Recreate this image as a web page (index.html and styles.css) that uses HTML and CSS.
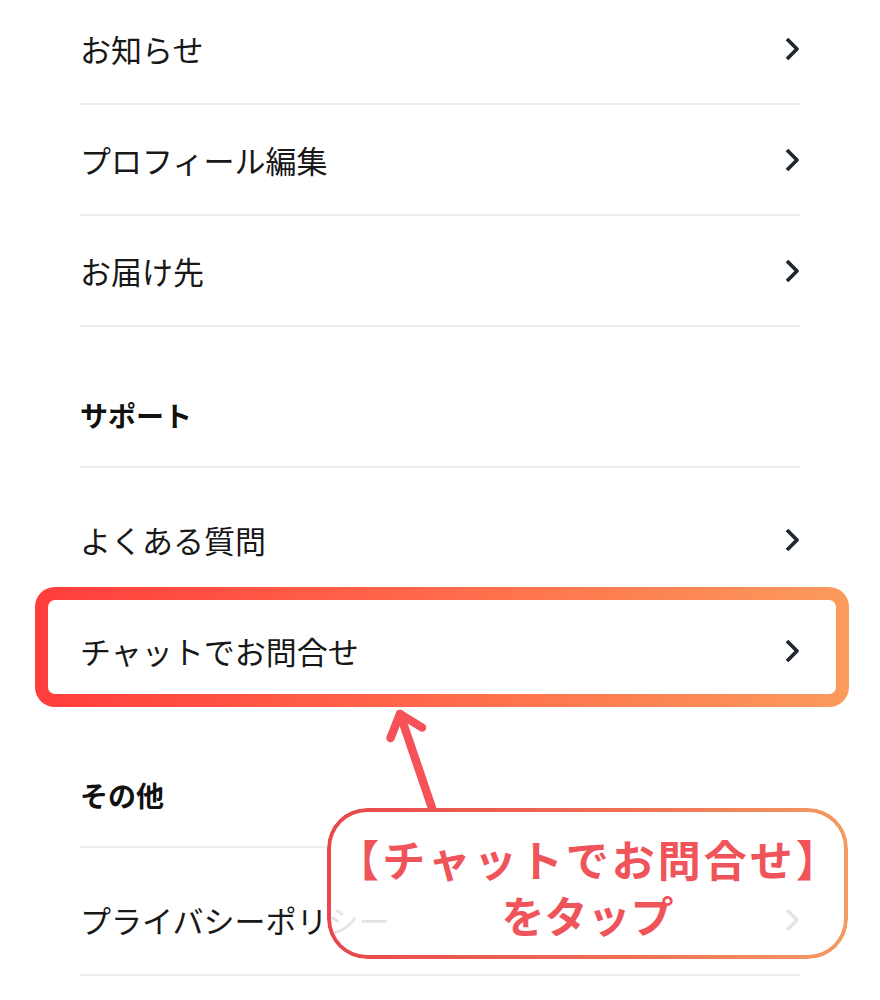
FILE: index.html
```html
<!DOCTYPE html>
<html lang="ja">
<head>
  <meta charset="UTF-8" />
  <meta name="viewport" content="width=device-width, initial-scale=1.0"/>
  <title>マイページ - チャットでお問合せ</title>
  <link rel="stylesheet" href="styles.css">
</head>
<body>

  <div class="screen">
    <ul class="menu">
      <li class="row">お知らせ
        <svg class="chevron" viewBox="0 0 16 26"><path d="M3 3 L13 13 L3 23"/></svg>
      </li>
      <li class="row">プロフィール編集
        <svg class="chevron" viewBox="0 0 16 26"><path d="M3 3 L13 13 L3 23"/></svg>
      </li>
      <li class="row">お届け先
        <svg class="chevron" viewBox="0 0 16 26"><path d="M3 3 L13 13 L3 23"/></svg>
      </li>

      <li class="section">サポート</li>
      <li class="row first">よくある質問
        <svg class="chevron" viewBox="0 0 16 26"><path d="M3 3 L13 13 L3 23"/></svg>
      </li>
      <li class="row chat">チャットでお問合せ
        <svg class="chevron" viewBox="0 0 16 26"><path d="M3 3 L13 13 L3 23"/></svg>
        <span class="highlight"></span>
      </li>

      <li class="section">その他</li>
      <li class="row first">プライバシーポリシー
        <svg class="chevron" viewBox="0 0 16 26"><path d="M3 3 L13 13 L3 23"/></svg>
      </li>
    </ul>

    <!-- annotation -->
    <svg class="arrow" viewBox="370 700 80 120" width="80" height="120">
      <path d="M432 808 L400 714"/>
      <path d="M390.5 738 L400 714 L422 727.5"/>
    </svg>

    <div class="callout">
      <span class="callout-main">【チャットでお問合せ】</span>
      <span>をタップ</span>
    </div>
  </div>

</body>
</html>
```

FILE: styles.css
```css
* {
  box-sizing: border-box;
  margin: 0;
  padding: 0;
}

body {
  background: #fff;
  font-family: "Noto Sans CJK JP", "Noto Sans", sans-serif;
  color: #181818;
}

.screen {
  position: relative;
  width: 880px;
  height: 1000px;
  overflow: hidden;
}

.menu {
  list-style: none;
  margin: -6px 80px 0;
}

.row {
  position: relative;
  height: 111px;
  display: flex;
  align-items: center;
  justify-content: space-between;
  border-bottom: 2px solid #ececec;
  font-size: 31px;
  line-height: 40px;
}

.row.first {
  height: 128px;
  padding-top: 17px;
}

.chevron {
  width: 16px;
  height: 26px;
}

.chevron path {
  fill: none;
  stroke: #1f2830;
  stroke-width: 3.8;
  stroke-linejoin: round;
}

.section {
  height: 141px;
  display: flex;
  align-items: flex-end;
  padding-bottom: 31px;
  border-bottom: 2px solid #ececec;
  font-size: 28px;
  line-height: 40px;
  font-weight: 700;
  color: #111;
}

/* thick frame around the chat row */
.highlight {
  position: absolute;
  top: -9px;
  left: -45px;
  right: -49px;
  bottom: -2px;
  border: 13px solid transparent;
  border-radius: 20px;
  background:
    linear-gradient(#fff, #fff) padding-box,
    linear-gradient(90deg, #ff3d3d, #ff6f4c 55%, #fb9b5c) border-box;
  z-index: -1;
}

.chat {
  z-index: 0;
}

.arrow {
  position: absolute;
  left: 370px;
  top: 700px;
}

.arrow path {
  fill: none;
  stroke: #f65257;
  stroke-width: 8.5;
  stroke-linecap: round;
  stroke-linejoin: round;
}

.callout {
  position: absolute;
  left: 327px;
  top: 808px;
  width: 521px;
  height: 151px;
  border-radius: 40px;
  background: rgba(255, 255, 255, 0.88);
  display: flex;
  flex-direction: column;
  align-items: center;
  justify-content: center;
  padding-top: 4px;
  font-size: 43px;
  line-height: 56px;
  font-weight: 700;
  color: #f0545b;
}

.callout-main {
  letter-spacing: 3px;
  margin-right: -3px;
}

.callout::before {
  content: "";
  position: absolute;
  inset: 0;
  border-radius: inherit;
  padding: 4px;
  background: linear-gradient(90deg, #e8474c, #f07255 60%, #f49b60);
  -webkit-mask: linear-gradient(#000 0 0) content-box, linear-gradient(#000 0 0);
  -webkit-mask-composite: xor;
  mask-composite: exclude;
}
```
